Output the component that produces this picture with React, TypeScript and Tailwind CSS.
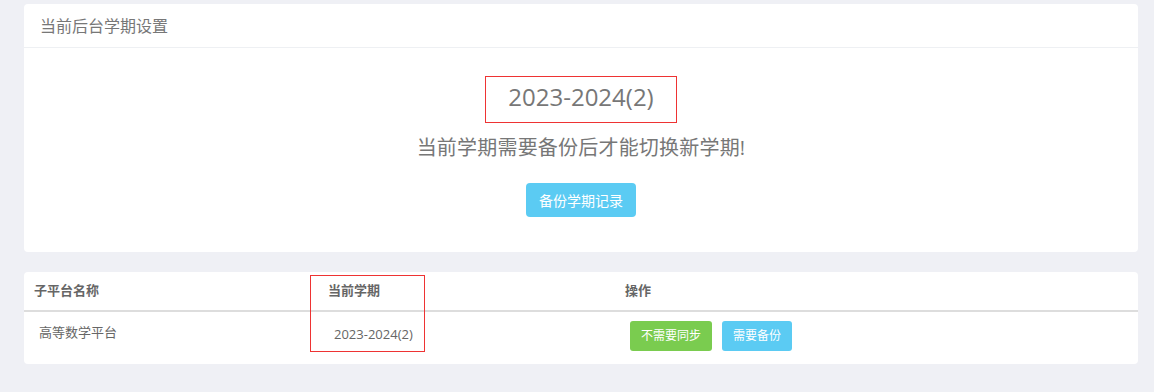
import React from "react";

const font = { fontFamily: '"Open Sans", "Noto Sans CJK SC", sans-serif' };

export default function App() {
  return (
    <div
      className="min-h-[392px] w-[1154px] bg-[#eff0f5] pl-[24px] pr-[16px] pt-[4px] pb-[28px] text-[#666]"
      style={font}
    >
      {/* 学期设置 */}
      <div className="rounded-[4px] bg-white">
        <div className="flex h-[44px] items-center border-b border-[#eef0f3] px-[16px] text-[16px] text-[#777]">
          当前后台学期设置
        </div>
        <div className="flex h-[204px] flex-col items-center pt-[28px]">
          <div className="flex h-[47px] w-[192px] items-center justify-center border border-[#ee3333] pb-[5px] text-[24px] text-[#777]">
            2023-2024(2)
          </div>
          <div className="mt-[11px] text-[20px] leading-[28px] tracking-[0.2px] text-[#777]">
            当前学期需要备份后才能切换新学期!
          </div>
          <button className="mt-[21px] h-[34px] w-[110px] rounded-[4px] bg-[#5bcbf3] text-[14px] text-white">
            备份学期记录
          </button>
        </div>
      </div>

      {/* 子平台列表 */}
      <div className="relative mt-[20px] rounded-[4px] bg-white">
        <div className="grid h-[40px] grid-cols-[294px_297px_1fr] items-center border-b-2 border-[#dddddd] text-[13px] font-bold text-[#666]">
          <div className="pl-[10px]">子平台名称</div>
          <div className="pl-[10px]">当前学期</div>
          <div className="pl-[10px]">操作</div>
        </div>
        <div className="grid h-[52px] grid-cols-[294px_297px_1fr] items-center text-[13px] text-[#666]">
          <div className="pl-[15px] pb-[10px]">高等数学平台</div>
          <div className="pl-[16px] pb-[6px]">2023-2024(2)</div>
          <div className="flex gap-[10px] pl-[15px] pb-[4px]">
            <button className="h-[30px] w-[82px] rounded-[3px] bg-[#7acc4f] text-[12px] text-white">
              不需要同步
            </button>
            <button className="h-[30px] w-[70px] rounded-[3px] bg-[#5bcbf3] text-[12px] text-white">
              需要备份
            </button>
          </div>
        </div>
        <div className="pointer-events-none absolute left-[286px] top-[3px] h-[77px] w-[115px] border border-[#ee3333]" />
      </div>
    </div>
  );
}
